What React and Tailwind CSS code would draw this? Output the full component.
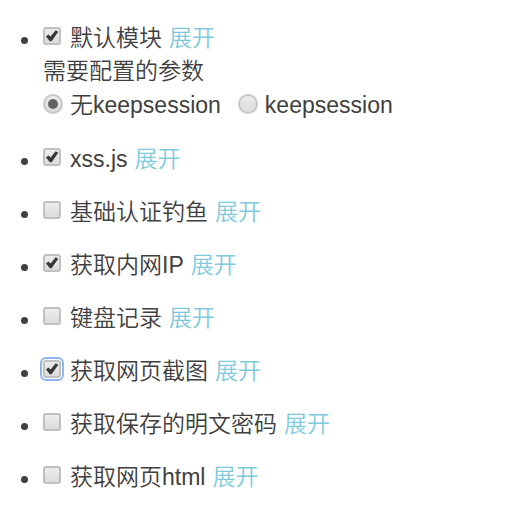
import { useState } from "react";

const initialModules = [
  { id: "default", label: "默认模块", checked: true, params: true },
  { id: "xss", label: "xss.js", checked: true },
  { id: "auth", label: "基础认证钓鱼", checked: false },
  { id: "ip", label: "获取内网IP", checked: true },
  { id: "keys", label: "键盘记录", checked: false },
  { id: "shot", label: "获取网页截图", checked: true, active: true },
  { id: "password", label: "获取保存的明文密码", checked: false },
  { id: "html", label: "获取网页html", checked: false },
];

function Checkbox({ id, checked, active, onChange }) {
  return (
    <span className="mb-1.5 grid shrink-0 place-items-center">
      <input
        id={id}
        type="checkbox"
        checked={checked}
        onChange={onChange}
        className={`col-start-1 row-start-1 size-[18px] appearance-none rounded-[3px] border-2 border-[#c0c0c0] bg-linear-to-b from-[#ececec] to-[#dcdcdc] ${
          active ? "outline-2 outline-offset-1 outline-[#8fb4f5]" : "outline-none"
        }`}
      />
      {checked && (
        <svg viewBox="0 0 18 18" className="pointer-events-none col-start-1 row-start-1 size-[18px]">
          <path d="M3 9.4 L5.4 7.4 L7.6 9.6 L12.7 3.2 L15.3 4.8 L8.6 14.2 L6.9 14.2 Z" fill="#383838" />
        </svg>
      )}
    </span>
  );
}

function Radio({ id, checked, label, onChange }) {
  return (
    <span className="flex items-center gap-[7px]">
      <span className="mb-1 grid shrink-0 place-items-center">
        <input
          id={id}
          type="radio"
          name="session"
          checked={checked}
          onChange={onChange}
          className="col-start-1 row-start-1 size-5 appearance-none rounded-full border-2 border-[#c6c6c6] bg-linear-to-b from-[#ececec] to-[#dcdcdc] outline-none"
        />
        {checked && (
          <span className="pointer-events-none col-start-1 row-start-1 size-2.5 rounded-full bg-[#626262]" />
        )}
      </span>
      <label htmlFor={id}>{label}</label>
    </span>
  );
}

export default function App() {
  const [modules, setModules] = useState(initialModules);
  const [session, setSession] = useState("none");

  const toggle = (id) =>
    setModules(modules.map((m) => (m.id === id ? { ...m, checked: !m.checked } : m)));

  return (
    <main className="min-h-screen bg-white px-[21px] py-[22px] font-['Liberation_Sans','Noto_Sans_CJK_SC',sans-serif] text-[23px] leading-[33px] font-[350] text-[#404040]">
      <ul className="flex flex-col gap-5">
        {modules.map((m) => (
          <li
            key={m.id}
            className="flex items-start gap-[15px] before:mt-[15px] before:size-[7px] before:shrink-0 before:rounded-full before:bg-[#404040]"
          >
            <div>
              <div className="flex h-[33px] items-center">
                <Checkbox id={m.id} checked={m.checked} active={m.active} onChange={() => toggle(m.id)} />
                <label htmlFor={m.id} className="ml-[9px]">
                  {m.label}
                </label>
                <a href="#" className="ml-[7px] text-[#7fcbdd]">
                  展开
                </a>
              </div>
              {m.params && (
                <>
                  <p>需要配置的参数</p>
                  <div className="flex h-[35px] items-center gap-[17px]">
                    <Radio
                      id="session-none"
                      label="无keepsession"
                      checked={session === "none"}
                      onChange={() => setSession("none")}
                    />
                    <Radio
                      id="session-keep"
                      label="keepsession"
                      checked={session === "keep"}
                      onChange={() => setSession("keep")}
                    />
                  </div>
                </>
              )}
            </div>
          </li>
        ))}
      </ul>
    </main>
  );
}
